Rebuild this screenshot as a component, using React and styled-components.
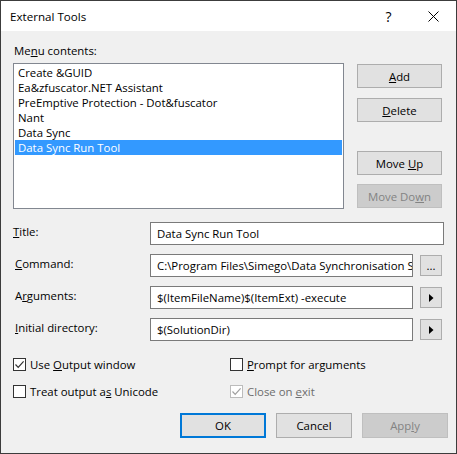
import React from 'react'
import styled, { createGlobalStyle } from 'styled-components'

const Global = createGlobalStyle`
  html, body { margin: 0; padding: 0; background: #ffffff; }
  * { box-sizing: border-box; }
`

const Window = styled.div`
  width: 457px;
  height: 454px;
  border: 1px solid #3c3c3c;
  display: flex;
  flex-direction: column;
  font-family: "Open Sans", "Noto Sans", sans-serif;
  font-size: 11.4px;
  color: #000;
  overflow: hidden;
`
const TitleBar = styled.div`
  height: 30px;
  flex: 0 0 30px;
  background: #ffffff;
  display: flex;
  align-items: center;
  padding-left: 9px;
`
const Caption = styled.div`
  flex: 1;
  font-size: 11.6px;
`
const CaptionButton = styled.div`
  width: 45px;
  height: 30px;
  display: flex;
  align-items: center;
  justify-content: center;
  font-size: 14px;
`
const Client = styled.div`
  flex: 1;
  background: #f0f0f0;
  padding: 12px 8px 0 12px;
  display: flex;
  flex-direction: column;
`
const Label = styled.div`
  line-height: 16px;
  height: 16px;
  padding-left: 1px;
  white-space: nowrap;
`
const Top = styled.div`
  display: flex;
  margin-top: 4px;
  gap: 13px;
`
const ListBox = styled.div`
  width: 331px;
  height: 146px;
  border: 1px solid #828790;
  background: #fff;
  padding: 1px;
`
const ListItem = styled.div`
  height: 15px;
  line-height: 15px;
  padding-left: 3px;
  white-space: nowrap;
  background: ${p => (p.$selected ? '#3399ff' : 'transparent')};
  color: ${p => (p.$selected ? '#fff' : '#000')};
`
const ButtonCol = styled.div`
  width: 86px;
  display: flex;
  flex-direction: column;
  padding-top: 1px;
`
const Button = styled.div`
  width: ${p => p.$w || 85}px;
  height: ${p => p.$h || 24}px;
  margin-top: ${p => p.$mt || 0}px;
  border: ${p => (p.$default ? '2px solid #0078d7' : p.$disabled ? '1px solid #bfbfbf' : '1px solid #adadad')};
  background: ${p => (p.$disabled ? '#cccccc' : '#e1e1e1')};
  color: ${p => (p.$disabled ? '#838383' : '#000')};
  display: flex;
  align-items: center;
  justify-content: center;
  white-space: nowrap;
  flex: 0 0 auto;
`
const Form = styled.div`
  margin-top: 13px;
  display: flex;
  flex-direction: column;
  gap: 9px;
`
const FieldRow = styled.div`
  display: flex;
  align-items: center;
  height: 23px;
  gap: 7px;
`
const FieldLabel = styled.div`
  width: 137px;
  flex: 0 0 137px;
  padding-left: ${p => p.$pl ?? 2}px;
  margin-right: -7px;
  margin-top: -5px;
  white-space: nowrap;
`
const Input = styled.div`
  width: ${p => p.$w}px;
  flex: 0 0 auto;
  height: 23px;
  border: 1px solid #7a7a7a;
  background: #fff;
  padding-left: 6px;
  line-height: 21px;
  white-space: nowrap;
  overflow: hidden;
`
const Checks = styled.div`
  margin-top: 16px;
  display: grid;
  grid-template-columns: 217px 1fr;
  row-gap: 13px;
`
const Check = styled.div`
  display: flex;
  align-items: center;
  gap: 4px;
  height: 14px;
  color: ${p => (p.$disabled ? '#6d6d6d' : '#000')};
  white-space: nowrap;
`
const Box = styled.div`
  width: 13px;
  height: 13px;
  border: 1px solid ${p => (p.$disabled ? '#bcbcbc' : '#333333')};
  background: #fff;
  display: flex;
  align-items: center;
  justify-content: center;
`
const Footer = styled.div`
  margin-top: 15px;
  display: flex;
  justify-content: flex-end;
  gap: 10px;
`

const Tick = ({ color }) => (
  <svg width="11" height="11" viewBox="0 0 11 11">
    <path d="M1.5 5.5 L4.2 8.3 L9.6 2.4" fill="none" stroke={color} strokeWidth="1.2" />
  </svg>
)

const Arrow = () => (
  <svg width="5" height="8" viewBox="0 0 5 8">
    <path d="M0 0 L4.5 4 L0 8 Z" fill="#000" />
  </svg>
)

const items = [
  'Create &GUID',
  'Ea&zfuscator.NET Assistant',
  'PreEmptive Protection - Dot&fuscator',
  'Nant',
  'Data Sync',
  'Data Sync Run Tool',
]

const App = () => {
  return (
    <Window>
      <Global />
      <TitleBar>
        <Caption>External Tools</Caption>
        <CaptionButton>?</CaptionButton>
        <CaptionButton>
          <svg width="11" height="11" viewBox="0 0 11 11">
            <path d="M0.5 0.5 L10.5 10.5 M10.5 0.5 L0.5 10.5" stroke="#000" strokeWidth="1" />
          </svg>
        </CaptionButton>
      </TitleBar>
      <Client>
        <Label>Me<u>n</u>u contents:</Label>
        <Top>
          <ListBox>
            {items.map((t, i) => (
              <ListItem key={t} $selected={i === items.length - 1}>{t}</ListItem>
            ))}
          </ListBox>
          <ButtonCol>
            <Button><span><u>A</u>dd</span></Button>
            <Button $mt={10}><span><u>D</u>elete</span></Button>
            <Button $mt={29}><span>Move <u>U</u>p</span></Button>
            <Button $mt={9} $disabled><span>Move Do<u>w</u>n</span></Button>
          </ButtonCol>
        </Top>
        <Form>
          <FieldRow>
            <FieldLabel $pl={0}><u>T</u>itle:</FieldLabel>
            <Input $w={294}>Data Sync Run Tool</Input>
          </FieldRow>
          <FieldRow>
            <FieldLabel><u>C</u>ommand:</FieldLabel>
            <Input $w={263}>C:\Program Files\Simego\Data Synchronisation Studio</Input>
            <Button $w={22} $h={21}>...</Button>
          </FieldRow>
          <FieldRow>
            <FieldLabel>A<u>r</u>guments:</FieldLabel>
            <Input $w={263}>$(ItemFileName)$(ItemExt) -execute</Input>
            <Button $w={22} $h={21}><Arrow /></Button>
          </FieldRow>
          <FieldRow>
            <FieldLabel><u>I</u>nitial directory:</FieldLabel>
            <Input $w={263}>$(SolutionDir)</Input>
            <Button $w={22} $h={21}><Arrow /></Button>
          </FieldRow>
        </Form>
        <Checks>
          <Check><Box><Tick color="#333" /></Box><span>Use <u>O</u>utput window</span></Check>
          <Check><Box /><span><u>P</u>rompt for arguments</span></Check>
          <Check><Box /><span>Treat output a<u>s</u> Unicode</span></Check>
          <Check $disabled><Box $disabled><Tick color="#a0a0a0" /></Box><span>Close on <u>e</u>xit</span></Check>
        </Checks>
        <Footer>
          <Button $w={86} $h={25} $default>OK</Button>
          <Button $w={76} $h={25}>Cancel</Button>
          <Button $w={86} $h={25} $disabled><span>App<u>l</u>y</span></Button>
        </Footer>
      </Client>
    </Window>
  )
}

export default App
